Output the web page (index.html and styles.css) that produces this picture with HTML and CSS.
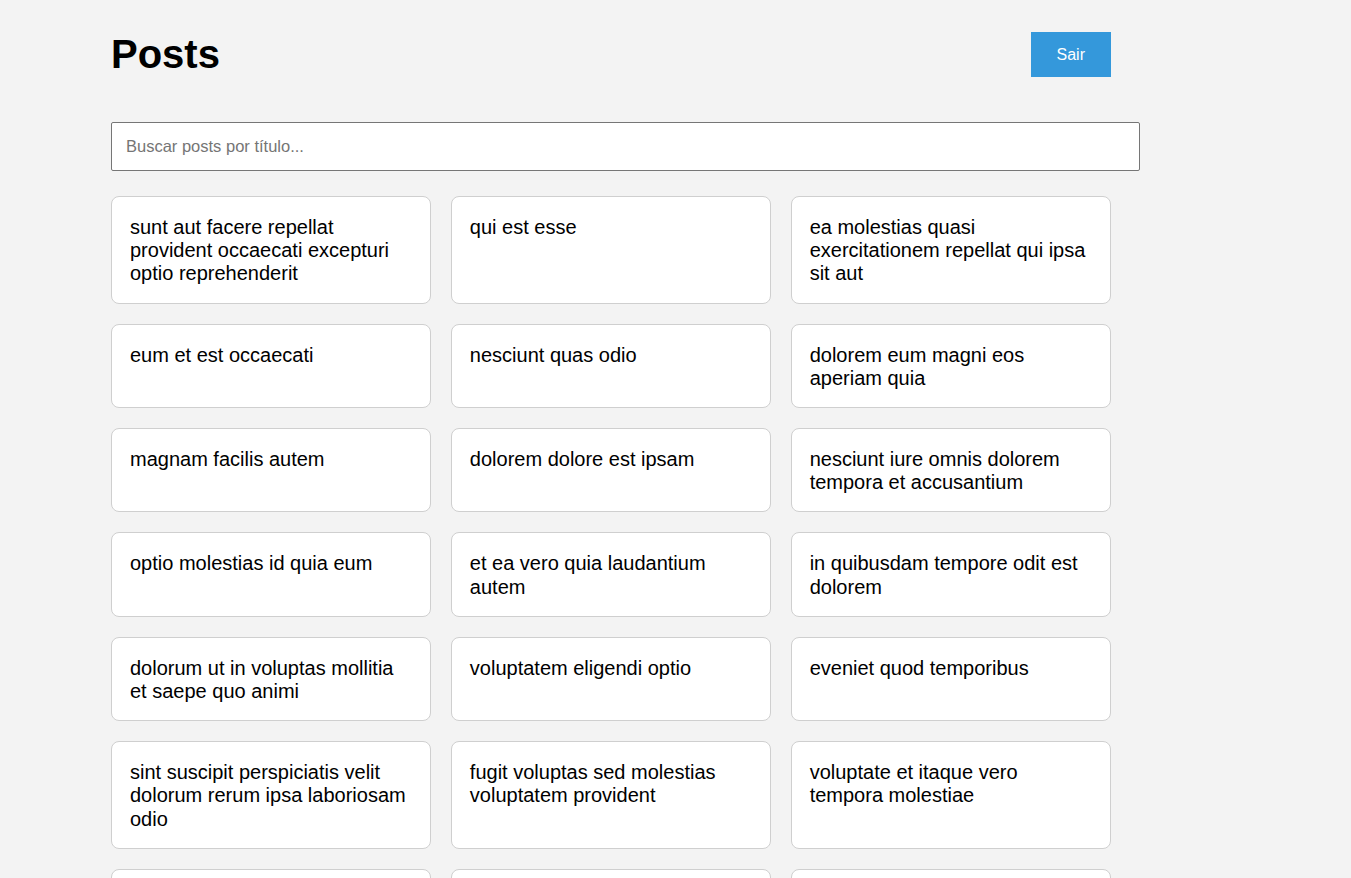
FILE: index.html
```html
<!DOCTYPE html>
<html lang="pt">
<head>
<meta charset="utf-8">
<title>Posts</title>
<link rel="stylesheet" href="styles.css">
</head>
<body>
<main class="page">
  <header class="header">
    <h1 class="title">Posts</h1>
    <button class="logout">Sair</button>
  </header>
  <input class="search" type="text" placeholder="Buscar posts por título...">
  <div class="grid">
    <div class="card"><h3 class="card-title">sunt aut facere repellat provident occaecati excepturi optio reprehenderit</h3></div>
    <div class="card"><h3 class="card-title">qui est esse</h3></div>
    <div class="card"><h3 class="card-title">ea molestias quasi exercitationem repellat qui ipsa sit aut</h3></div>
    <div class="card"><h3 class="card-title">eum et est occaecati</h3></div>
    <div class="card"><h3 class="card-title">nesciunt quas odio</h3></div>
    <div class="card"><h3 class="card-title">dolorem eum magni eos aperiam quia</h3></div>
    <div class="card"><h3 class="card-title">magnam facilis autem</h3></div>
    <div class="card"><h3 class="card-title">dolorem dolore est ipsam</h3></div>
    <div class="card"><h3 class="card-title">nesciunt iure omnis dolorem tempora et accusantium</h3></div>
    <div class="card"><h3 class="card-title">optio molestias id quia eum</h3></div>
    <div class="card"><h3 class="card-title">et ea vero quia laudantium autem</h3></div>
    <div class="card"><h3 class="card-title">in quibusdam tempore odit est dolorem</h3></div>
    <div class="card"><h3 class="card-title">dolorum ut in voluptas mollitia et saepe quo animi</h3></div>
    <div class="card"><h3 class="card-title">voluptatem eligendi optio</h3></div>
    <div class="card"><h3 class="card-title">eveniet quod temporibus</h3></div>
    <div class="card"><h3 class="card-title">sint suscipit perspiciatis velit dolorum rerum ipsa laboriosam odio</h3></div>
    <div class="card"><h3 class="card-title">fugit voluptas sed molestias voluptatem provident</h3></div>
    <div class="card"><h3 class="card-title">voluptate et itaque vero tempora molestiae</h3></div>
    <div class="card"><h3 class="card-title">adipisci placeat illum aut reiciendis qui</h3></div>
    <div class="card"><h3 class="card-title">doloribus ad provident suscipit at</h3></div>
    <div class="card"><h3 class="card-title">asperiores ea ipsam voluptatibus modi minima quia sint</h3></div>
    <div class="card"><h3 class="card-title">dolor sint quo a velit explicabo quia nam</h3></div>
    <div class="card"><h3 class="card-title">maxime id vitae nihil numquam</h3></div>
    <div class="card"><h3 class="card-title">autem hic labore sunt dolores incidunt</h3></div>
  </div>
</main>
</body>
</html>
```
FILE: styles.css
```css
html, body {
  margin: 0;
  padding: 0;
  background: #f3f3f3;
  font-family: "Liberation Sans", Arial, sans-serif;
  color: #000;
}

.page {
  width: 1000px;
  margin-left: 111px;
  padding-top: 31px;
}

.header {
  display: flex;
  justify-content: space-between;
  align-items: center;
  margin-bottom: 45px;
}

.title {
  margin: 0;
  font-size: 40px;
  line-height: 46px;
  font-weight: bold;
}

.logout {
  background: #3498db;
  color: #fff;
  border: none;
  border-radius: 0;
  padding: 13px 26px;
  font-family: "Liberation Sans", Arial, sans-serif;
  font-size: 16px;
  line-height: 19px;
  cursor: pointer;
}

.search {
  display: block;
  width: 999px;
  padding: 14px 14px;
  border: 1px solid #767676;
  border-radius: 2px;
  font-family: "Liberation Sans", Arial, sans-serif;
  font-size: 16.5px;
  line-height: 19px;
  background: #fff;
  margin: 0 0 25px 0;
}

.search::placeholder {
  color: #757575;
}

.grid {
  display: grid;
  grid-template-columns: repeat(3, 1fr);
  column-gap: 19.5px;
  row-gap: 20px;
}

.card {
  background: #fff;
  border: 1px solid #cfcfcf;
  border-radius: 8px;
  padding: 19px 18px 17px;
}

.card-title {
  margin: 0;
  font-size: 20px;
  line-height: 23.2px;
  font-weight: normal;
}
```
